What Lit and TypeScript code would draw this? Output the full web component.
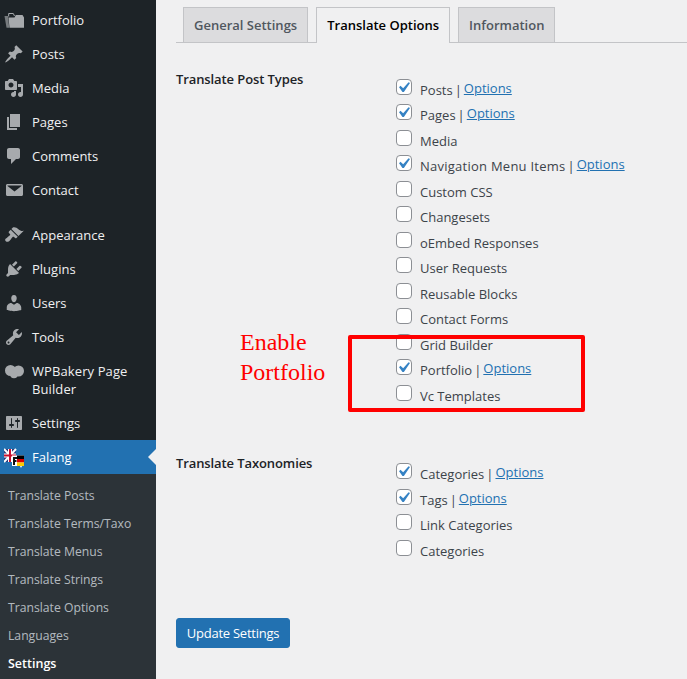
import { LitElement, html, css, svg } from "lit";
import { customElement } from "lit/decorators.js";

const ICONS: Record<string, any> = {
  folder: svg`<path d="M.5 6H4l1.200 11.800H2.500z" opacity=".65"/><path d="M4.500 7.500h6l1.300-2.500h6.700l1.500 2.500v10.300H5.500z"/><path d="M4.700 6.500V3.500h4.600l1.200 2.500" fill="none" stroke="#a7aaad" stroke-width="1"/>`,
  pin: svg`<path d="M10.44 3.02l1.82-1.82 6.36 6.35-1.83 1.82c-1.05-.68-2.48-.57-3.41.36l-.75.75c-.92.93-1.04 2.35-.35 3.41l-1.83 1.82-2.41-2.41-2.8 2.79c-.42.42-3.38 2.71-3.8 2.29s1.86-3.39 2.28-3.81l2.79-2.79L4.1 9.36l1.83-1.82c1.05.69 2.48.57 3.4-.36l.75-.75c.93-.92 1.05-2.35.36-3.41z"/>`,
  media: svg`<path d="M13 11V4c0-.55-.45-1-1-1h-1.67L9 1H5L3.67 3H2c-.55 0-1 .45-1 1v7c0 .55.45 1 1 1h10c.55 0 1-.45 1-1zM7 4.5c1.38 0 2.5 1.12 2.5 2.5S8.38 9.5 7 9.5 4.5 8.38 4.5 7 5.62 4.5 7 4.5zM14 6h5v10.5c0 1.38-1.12 2.5-2.5 2.5S14 17.88 14 16.5s1.12-2.5 2.5-2.5c.17 0 .34.02.5.05V9h-3V6zm-4 8.05V13h2v3.5c0 1.38-1.12 2.5-2.5 2.5S7 17.88 7 16.5 8.12 14 9.5 14c.17 0 .34.02.5.05z"/>`,
  page: svg`<path d="M6 15V2h10v13H6zm-1 1h8v2H3V5h2v11z"/>`,
  comment: svg`<path d="M5 2h9c1.1 0 2 .9 2 2v7c0 1.1-.9 2-2 2h-2l-5 5v-5H5c-1.1 0-2-.9-2-2V4c0-1.1.9-2 2-2z"/>`,
  mail: svg`<path d="M19 14.500v-9c0-.83-.67-1.500-1.500-1.500H3.490c-.83 0-1.500.67-1.500 1.500v9c0 .83.67 1.500 1.500 1.500H17.500c.83 0 1.500-.67 1.500-1.500zm-1.500-8.600l-7 5.600-7-5.600v-.4h14z" fill-rule="evenodd"/>`,
  brush: svg`<path d="M14.48 11.06L7.41 3.99l1.5-1.5c.5-.56 2.3-.47 3.51.32 1.21.8 1.43 1.28 2.91 2.1 1.18.64 2.45 1.26 4.45.85zm-.71.71L6.7 4.7 4.93 6.47c-.39.39-.39 1.02 0 1.41l1.06 1.06c.39.39.39 1.03 0 1.42-.6.6-1.43 1.11-2.21 1.69-.35.26-.7.53-1.01.84C1.43 13.23.4 14.75 1.8 16.16c1.41 1.41 2.93.38 4.27-.97.31-.31.58-.66.84-1.01.58-.78 1.09-1.61 1.69-2.21.39-.39 1.02-.39 1.41 0l1.06 1.06c.39.39 1.02.39 1.41 0z"/>`,
  plug: svg`<path d="M13.11 4.36L9.87 7.6 8 5.73l3.24-3.24c.35-.34 1.05-.2 1.56.32.52.51.66 1.21.31 1.55zm-8 1.77l.91-1.12 9.01 9.01-1.19.84c-.71.71-2.63 1.16-3.82 1.16H6.14L4.9 17.26c-.59.59-1.54.59-2.12 0-.59-.58-.59-1.53 0-2.12l1.24-1.24v-3.88c0-1.13.4-3.19 1.09-3.89zm7.26 3.97l3.24-3.24c.34-.35 1.04-.21 1.55.31.52.51.66 1.21.31 1.55l-3.24 3.25z"/>`,
  user: svg`<path d="M10 9.25c-2.27 0-2.73-3.44-2.73-3.44C7 4.02 7.82 2 9.97 2c2.16 0 2.98 2.02 2.71 3.81 0 0-.41 3.44-2.68 3.44zm0 2.57L12.72 10c2.39 0 4.52 2.33 4.52 4.53v2.49s-3.65 1.13-7.24 1.13c-3.65 0-7.24-1.13-7.24-1.13v-2.49c0-2.25 1.94-4.48 4.47-4.48z"/>`,
  wrench: svg`<path d="M16.68 9.77c-1.34 1.34-3.3 1.67-4.95.99l-5.41 6.52c-.99.99-2.59.99-3.58 0s-.99-2.59 0-3.57l6.52-5.42c-.68-1.65-.35-3.61.99-4.95 1.28-1.28 3.12-1.62 4.72-1.06l-2.89 2.89 2.82 2.82 2.86-2.87c.53 1.58.18 3.39-1.08 4.65zM3.81 16.21c.4.39 1.04.39 1.43 0 .4-.4.4-1.04 0-1.43-.39-.4-1.03-.4-1.43 0-.39.39-.39 1.03 0 1.43z"/>`,
  bakery: svg`<circle cx="6.500" cy="8.500" r="5.500"/><circle cx="14.500" cy="9" r="5.500"/><circle cx="10" cy="12.500" r="3.800"/>`,
  sliders: svg`<path d="M18 16V4c0-.55-.45-1-1-1H3c-.55 0-1 .45-1 1v12c0 .55.45 1 1 1h14c.55 0 1-.45 1-1zM8 11h1c.55 0 1 .45 1 1s-.45 1-1 1H8v1.5c0 .28-.22.5-.5.5s-.5-.22-.5-.5V13H6c-.55 0-1-.45-1-1s.45-1 1-1h1V5.5c0-.28.22-.5.5-.5s.5.22.5.5V11zm5-2h-1c-.55 0-1-.45-1-1s.45-1 1-1h1V5.5c0-.28.22-.5.5-.5s.5.22.5.5V7h1c.55 0 1 .45 1 1s-.45 1-1 1h-1v5.5c0 .28-.22.5-.5.5s-.5-.22-.5-.5V9z"/>`,
};

const MENU_TOP = [
  ["folder", "Portfolio"], ["pin", "Posts"], ["media", "Media"], ["page", "Pages"],
  ["comment", "Comments"], ["mail", "Contact"],
];
const MENU_MID = [
  ["brush", "Appearance"], ["plug", "Plugins"], ["user", "Users"], ["wrench", "Tools"],
  ["bakery", "WPBakery Page Builder"], ["sliders", "Settings"],
];
const SUB = ["Translate Posts", "Translate Terms/Taxo", "Translate Menus", "Translate Strings", "Translate Options", "Languages", "Settings"];

type Row = [string, boolean, boolean];
const POST_TYPES: Row[] = [
  ["Posts", true, true], ["Pages", true, true], ["Media", false, false],
  ["Navigation Menu Items", true, true], ["Custom CSS", false, false], ["Changesets", false, false],
  ["oEmbed Responses", false, false], ["User Requests", false, false], ["Reusable Blocks", false, false],
  ["Contact Forms", false, false], ["Grid Builder", false, false], ["Portfolio", true, true], ["Vc Templates", false, false],
];
const TAXONOMIES: Row[] = [
  ["Categories", true, true], ["Tags", true, true], ["Link Categories", false, false], ["Categories", false, false],
];

@customElement("app-root")
export class AppRoot extends LitElement {
  static styles = css`
    :host { display: block; width: 687px; height: 679px; overflow: hidden; position: relative; background: #f0f0f1; font-family: "Open Sans", "Noto Sans", sans-serif; font-size: 13px; color: #3c434a; }
    .layout { display: flex; height: 679px; }
    .side { width: 156px; flex: none; background: #1d2327; color: #f0f0f1; padding-top: 3px; box-sizing: border-box; display: flex; flex-direction: column; }
    .item { display: flex; align-items: center; height: 34px; flex: none; }
    .item.tall { height: 52px; line-height: 18px; align-items: flex-start; padding-top: 8px; box-sizing: border-box; }
    .item.tall span { letter-spacing: .1px; }
    .item svg { width: 20px; height: 20px; margin-left: 4px; margin-right: 8px; fill: #a7aaad; flex: none; }
    .sep { height: 11px; flex: none; }
    .active { background: #2271b1; color: #fff; position: relative; }
    .active::after { content: ""; position: absolute; right: 0; top: 9px; border: 8px solid transparent; border-right-color: #f0f0f1; border-left-width: 0; }
    .sub { background: #2c3338; flex: 1; padding-top: 8px; font-size: 12.200px; color: rgba(240,246,252,.7); }
    .sub div { height: 28px; line-height: 28px; padding-left: 8px; }
    .sub .cur { color: #fff; font-weight: 600; font-size: 12.500px; }
    .main { flex: 1; padding: 7px 0 0 20px; min-width: 0; }
    .tabs { display: flex; height: 35px; border-bottom: 1px solid #c3c4c7; padding-left: 7px; gap: 8px; }
    .tab { height: 35px; padding: 0 10px; box-sizing: border-box; line-height: 35px; border: 1px solid #c3c4c7; border-bottom: none; background: #dcdcde; color: #50575e; font-weight: 600; font-size: 13px; }
    .tab.on { height: 36px; background: #f0f0f1; color: #000; }
    .sect { display: flex; }
    .sect.first { margin-top: 25px; }
    .sect.first .th { margin-top: 1px; }
    .sect.second { margin-top: 44px; }
    .th { width: 220px; flex: none; font-weight: 600; color: #1d2327; font-size: 13px; letter-spacing: -.1px; line-height: 20px; }
    .rows { padding-top: 9px; }
    .row { display: flex; align-items: center; height: 25.500px; white-space: pre; }
    .box { width: 16px; height: 16px; box-sizing: border-box; border: 1px solid #8c8f94; border-radius: 4px; background: #fff; margin-right: 8px; margin-bottom: 6px; flex: none; display: flex; }
    .box svg { width: 21px; height: 21px; margin: -3px 0 0 -4px; fill: #3582c4; flex: none; }
    .wide { letter-spacing: .25px; }
    .bar { margin: 0 2px; }
    a { color: #2271b1; text-decoration: underline; position: relative; top: -2px; }
    .btn { display: block; margin-top: 54px; height: 30px; line-height: 28px; width: 114px; text-align: center; box-sizing: border-box; background: #2271b1; border: 1px solid #2271b1; border-radius: 3px; color: #fff; letter-spacing: -.25px; }
    .note { position: absolute; left: 240px; top: 327px; color: #f00; font: 24px/30px "Liberation Serif", serif; }
    .redbox { position: absolute; left: 348px; top: 335px; width: 237px; height: 77px; box-sizing: border-box; border: 4px solid #f00; border-radius: 2px; }
  `;

  private item(icon: string, label: string, tall = false) {
    return html`<div class="item ${tall ? "tall" : ""}"><svg viewBox="0 0 20 20">${ICONS[icon]}</svg><span>${label}</span></div>`;
  }

  private row(r: Row) {
    return html`<div class="row"><span class="box">${r[1] ? html`<svg viewBox="0 0 20 20"><path d="M14.83 4.89l1.34.94-5.81 8.38H9.020L5.780 9.670l1.340-1.250 2.570 2.400z"/></svg>` : ""}</span><span class="${r[0].length > 20 ? "wide" : ""}">${r[0]}</span>${r[2] ? html`<span class="bar">|</span><a>Options</a>` : ""}</div>`;
  }

  render() {
    return html`<div class="layout">
      <nav class="side">
        ${MENU_TOP.map((m) => this.item(m[0], m[1]))}
        <div class="sep"></div>
        ${MENU_MID.map((m) => this.item(m[0], m[1], m[0] === "bakery"))}
        <div class="item active">
          <svg viewBox="0 0 20 21" style="height:21px">
            <rect x="0" y="2" width="12" height="13" rx="1" fill="#2b3a7c"/>
            <path d="M0 2l12 13M12 2L0 15" stroke="#fff" stroke-width="2"/>
            <path d="M6 2v13M0 8.500h12" stroke="#fff" stroke-width="4"/>
            <path d="M6 2v13M0 8.500h12" stroke="#c8102e" stroke-width="2"/>
            <path d="M8 8.500h12v10.500h-2l-1 2-1-2H8z" fill="#fff"/>
            <rect x="13" y="8.500" width="7" height="3.500" fill="#000"/>
            <rect x="13" y="12" width="7" height="3.500" fill="#d00"/>
            <rect x="13" y="15.500" width="7" height="3.500" fill="#fc0"/>
            <path d="M10 10v8M10 11h3M10 14h2.500" stroke="#111" stroke-width="2" fill="none"/>
          </svg>
          <span>Falang</span>
        </div>
        <div class="sub">${SUB.map((s, i) => html`<div class="${i === 6 ? "cur" : ""}">${s}</div>`)}</div>
      </nav>
      <main class="main">
        <div class="tabs">
          <div class="tab">General Settings</div>
          <div class="tab on">Translate Options</div>
          <div class="tab">Information</div>
        </div>
        <div class="sect first"><div class="th">Translate Post Types</div><div class="rows">${POST_TYPES.map((r) => this.row(r))}</div></div>
        <div class="sect second"><div class="th">Translate Taxonomies</div><div class="rows">${TAXONOMIES.map((r) => this.row(r))}</div></div>
        <div class="btn">Update Settings</div>
      </main>
    </div>
    <div class="note">Enable<br />Portfolio</div>
    <div class="redbox"></div>`;
  }
}
